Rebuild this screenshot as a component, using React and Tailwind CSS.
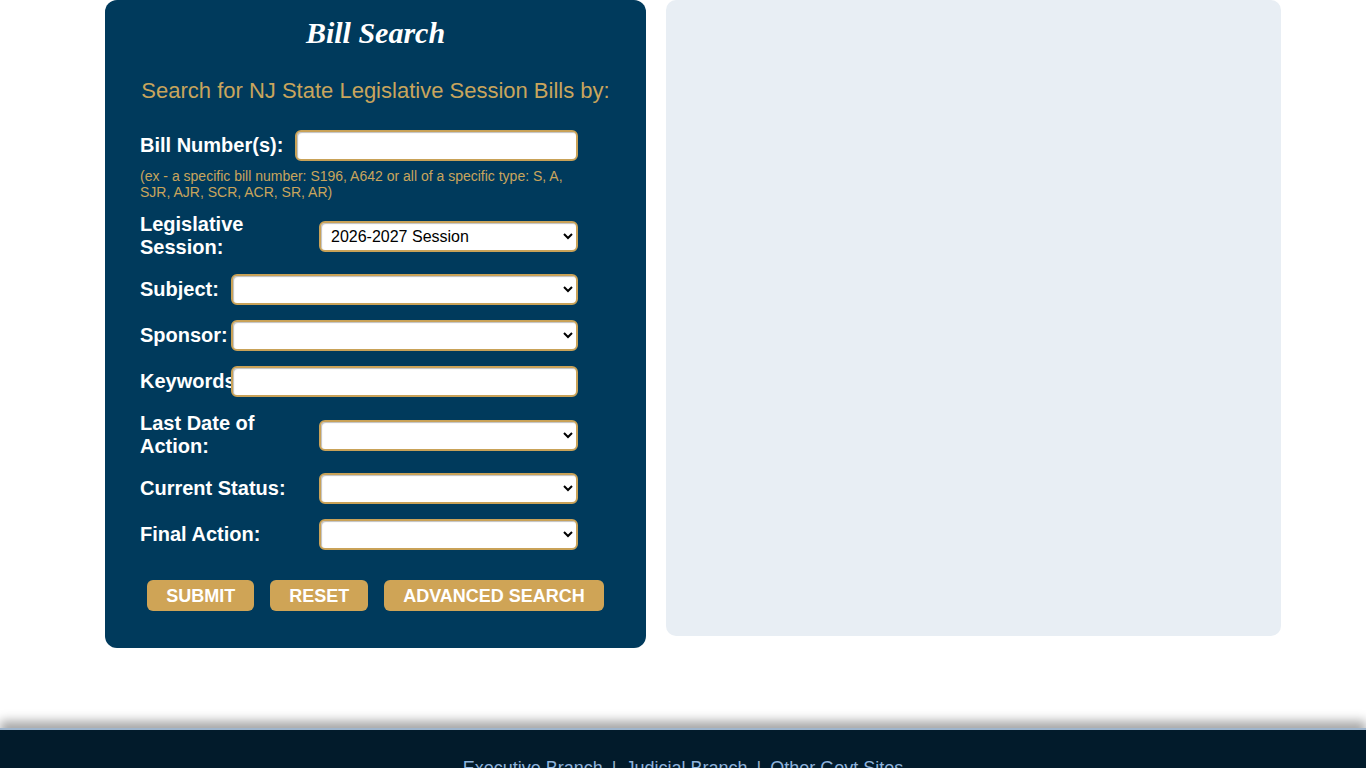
import React from 'react';

const field =
  'h-[31px] rounded-[6px] border-2 border-[#c9a258] bg-white text-[16px] text-black shadow-[inset_1px_1px_1px_rgba(0,0,0,0.25)] outline-none';

function Row({ label, labelW, children, tall }) {
  return (
    <div className={`flex items-center ${tall ? 'h-[46px]' : 'h-[31px]'}`}>
      <label
        className="shrink-0 whitespace-nowrap text-[20px] font-bold leading-[23px] text-white"
        style={{ width: labelW }}
      >
        {label}
      </label>
      {children}
    </div>
  );
}

function Select({ value }) {
  return (
    <select className={`${field} flex-1 pl-[6px]`} defaultValue={value}>
      {value ? <option>{value}</option> : <option></option>}
    </select>
  );
}

export default function App() {
  return (
    <div className="min-h-screen bg-white font-['Liberation_Sans',Arial,sans-serif]">
      <div className="flex gap-[20px] pl-[105px]">
        {/* search form */}
        <div className="w-[541px] rounded-[12px] bg-[#003a5c] px-[35px] pb-[37px] pt-[16px]">
          <h1 className="text-center font-['Liberation_Serif','Times_New_Roman',serif] text-[30px] font-bold italic leading-[34px] text-white">
            Bill Search
          </h1>
          <p className="mt-[28px] text-center text-[22px] leading-[26px] text-[#c9a55c]">
            Search for NJ State Legislative Session Bills by:
          </p>

          <div className="mt-[26px] w-[438px]">
            <Row label="Bill Number(s):" labelW={155}>
              <input type="text" className={`${field} w-[283px] px-2`} />
            </Row>
            <p className="mt-[7px] text-[14px] leading-[16px] text-[#c9a55c]">
              (ex - a specific bill number: S196, A642 or all of a specific type: S, A,
              <br />
              SJR, AJR, SCR, ACR, SR, AR)
            </p>

            <div className="mt-[13px] flex flex-col gap-[15px]">
              <Row
                label={
                  <>
                    Legislative
                    <br />
                    Session:
                  </>
                }
                labelW={179}
                tall
              >
                <Select value="2026-2027 Session" />
              </Row>
              <Row label="Subject:" labelW={91}>
                <Select />
              </Row>
              <Row label="Sponsor:" labelW={91}>
                <Select />
              </Row>
              <Row label="Keywords" labelW={91}>
                <input type="text" className={`${field} flex-1 px-2`} />
              </Row>
              <Row
                label={
                  <>
                    Last Date of
                    <br />
                    Action:
                  </>
                }
                labelW={179}
                tall
              >
                <Select />
              </Row>
              <Row label="Current Status:" labelW={179}>
                <Select />
              </Row>
              <Row label="Final Action:" labelW={179}>
                <Select />
              </Row>
            </div>
          </div>

          <div className="mt-[30px] flex justify-center gap-[16px]">
            {['SUBMIT', 'RESET', 'ADVANCED SEARCH'].map((b) => (
              <button
                key={b}
                className="h-[31px] rounded-[6px] bg-[#cfa456] px-[19px] text-[18px] font-bold leading-none text-white"
              >
                {b}
              </button>
            ))}
          </div>
        </div>

        {/* results area */}
        <div className="h-[636px] w-[615px] rounded-[10px] bg-[#e8eef4]" />
      </div>

      <footer className="mt-[80px] h-[120px] border-t-2 border-[#9fb5cc] bg-[#021b2b] shadow-[0_-7px_10px_rgba(0,0,0,0.35)]">
        <div className="pt-[28px] text-center text-[18px] leading-[20px] text-[#8fb3dc]">
          <a>Executive Branch</a>
          <span className="mx-[9px] text-[#9fb5cc]">|</span>
          <a>Judicial Branch</a>
          <span className="mx-[9px] text-[#9fb5cc]">|</span>
          <a>Other Govt Sites</a>
        </div>
      </footer>
    </div>
  );
}
